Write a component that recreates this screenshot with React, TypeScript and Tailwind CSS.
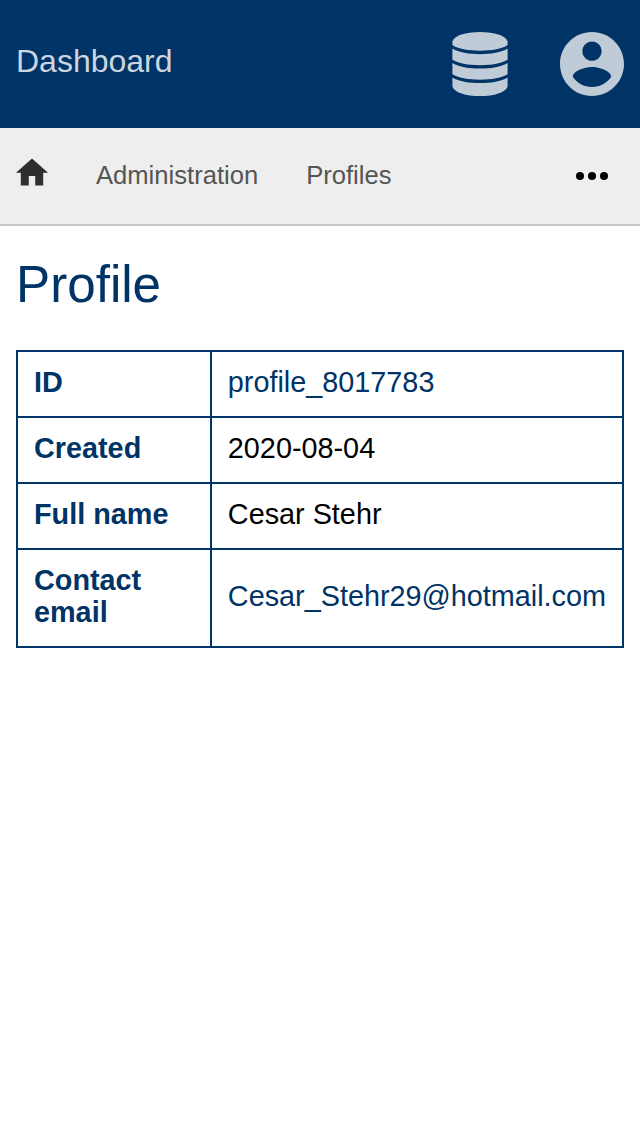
const rows = [
  { label: "ID", value: "profile_8017783", link: true },
  { label: "Created", value: "2020-08-04", link: false },
  { label: "Full name", value: "Cesar Stehr", link: false },
  { label: "Contact email", value: "Cesar_Stehr29@hotmail.com", link: true },
];

function DatabaseIcon() {
  return (
    <svg className="h-16 w-14" viewBox="0 0 56 64" fill="currentColor">
      <path d="M.4 9.500C2.500 3.500 13.500 0 28 0s25.500 3.500 27.600 9.500v3.500C50 17 40 18.700 28 18.700S6 17 .4 13z" />
      <path d="M.4 16.500C7 20.500 17 22.200 28 22.200s21-1.700 27.600-5.700v11.300C50 31.400 40 33.200 28 33.200S6 31.400.4 27.800z" />
      <path d="M.4 31C7 35 17 36.600 28 36.600S49 35 55.600 31v11.300C50 45.900 40 47.700 28 47.700S6 45.900.4 42.300z" />
      <path d="M.4 45.400C7 49.400 17 51.100 28 51.100s21-1.700 27.600-5.700v9C53.500 60.400 42.500 64 28 64S2.500 60.400.4 54.400z" />
    </svg>
  );
}

export default function App() {
  return (
    <div className="min-h-screen bg-white font-['Liberation_Sans',Arial,sans-serif] text-black">
      <header className="flex h-32 items-center justify-between bg-[#003366] px-4 text-[#bfccd8]">
        <a className="-mt-1.5 text-[32px] leading-9 text-[#ccd6e0]">Dashboard</a>
        <div className="flex items-center gap-[52px]">
          <DatabaseIcon />
          <svg className="size-16" viewBox="2 2 20 20" fill="currentColor">
            <path d="M12 2C6.48 2 2 6.48 2 12s4.480 10 10 10 10-4.480 10-10S17.520 2 12 2zm0 3c1.660 0 3 1.340 3 3s-1.340 3-3 3-3-1.340-3-3 1.340-3 3-3zm0 14.200c-2.500 0-4.710-1.280-6-3.220.030-1.990 4-3.080 6-3.080 1.990 0 5.970 1.090 6 3.080-1.290 1.940-3.500 3.220-6 3.220z" />
          </svg>
        </div>
      </header>
      <nav className="flex h-[98px] items-center border-b-2 border-[#c8c8c8] bg-[#eeeeee] px-4 text-[25.6px] leading-8 text-[#555555]">
        <svg className="mb-2 h-7 w-8 text-[#2e2e2e]" viewBox="2 2.750 20 17.500" fill="currentColor">
          <path d="M10 20v-6h4v6h5v-8h3L12 3 2 12h3v8z" />
        </svg>
        <a className="mb-0.5 ml-12">Administration</a>
        <a className="mb-0.5 ml-12">Profiles</a>
        <svg className="mr-4 ml-auto h-8 w-8 text-black" viewBox="0 0 32 32" fill="currentColor">
          <circle cx="4" cy="16" r="4" />
          <circle cx="16" cy="16" r="4" />
          <circle cx="28" cy="16" r="4" />
        </svg>
      </nav>
      <main className="px-4 pt-[29px]">
        <h1 className="text-[51.2px] leading-[60px] text-[#003366]">Profile</h1>
        <table className="mt-[35px] w-full border-collapse text-[28.8px] leading-8">
          <tbody>
            {rows.map((row) => (
              <tr key={row.label}>
                <th className="w-[194px] border-2 border-[#003366] px-4 pt-3.5 pb-[18px] text-left font-bold text-[#003366]">{row.label}</th>
                <td className={row.link ? "border-2 border-[#003366] px-4 pt-3.5 pb-[18px] text-[#003366]" : "border-2 border-[#003366] px-4 pt-3.5 pb-[18px]"}>{row.value}</td>
              </tr>
            ))}
          </tbody>
        </table>
      </main>
    </div>
  );
}
